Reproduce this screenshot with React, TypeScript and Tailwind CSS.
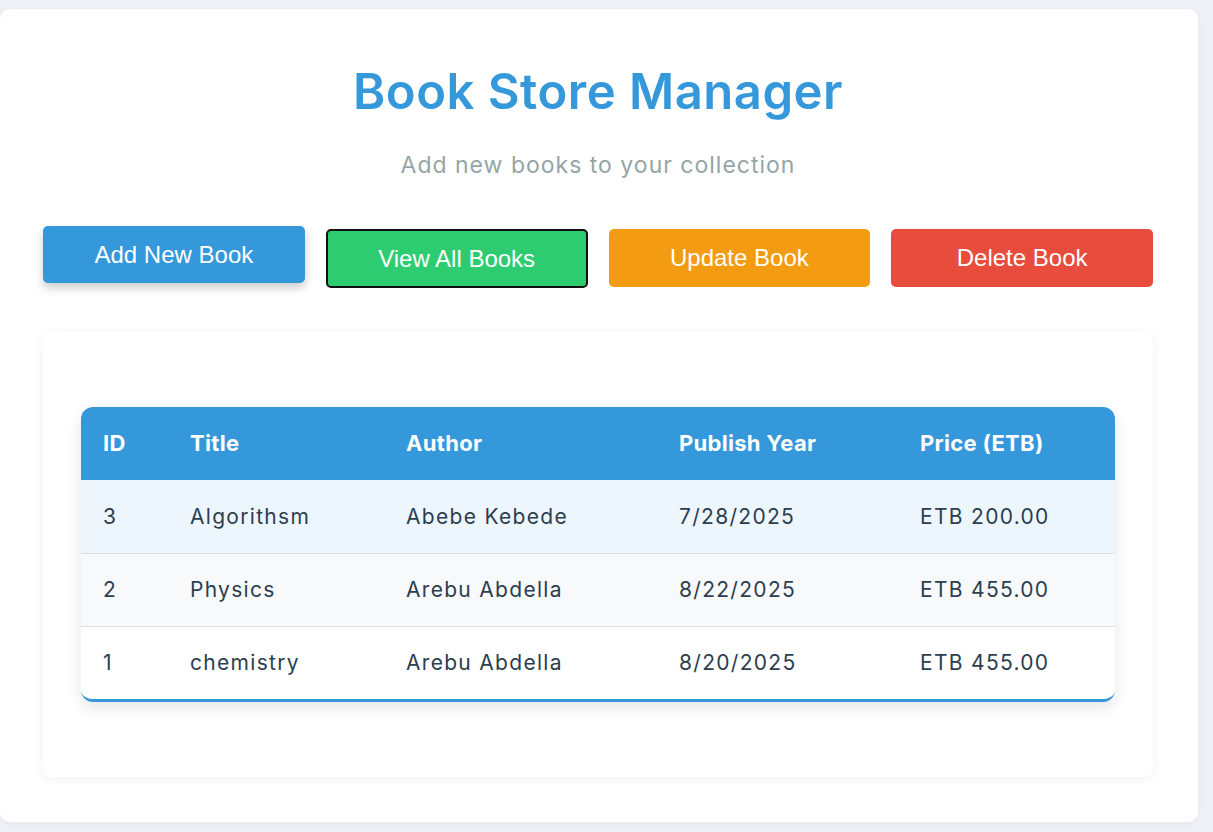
const books = [
  { id: 3, title: "Algorithsm", author: "Abebe Kebede", year: "7/28/2025", price: "ETB 200.00" },
  { id: 2, title: "Physics", author: "Arebu Abdella", year: "8/22/2025", price: "ETB 455.00" },
  { id: 1, title: "chemistry", author: "Arebu Abdella", year: "8/20/2025", price: "ETB 455.00" },
];

const rowBg = ["bg-[#eef6fd]", "bg-[#f8f9fa]", "bg-white"];

export default function App() {
  return (
    <div className="min-h-screen bg-[#eff0f5] pt-[9px] pr-[15px]" style={{ fontFamily: "Inter, 'Noto Sans', sans-serif" }}>
      <div className="bg-white rounded-[10px] h-[813px] pl-[43px] pr-[45px] pt-[49px] shadow-[0_2px_8px_rgba(0,0,0,0.04)]">
        {/* Header */}
        <h1 className="text-center text-[49px] leading-[68px] font-semibold text-[#3498db] tracking-[0.5px]">
          Book Store Manager
        </h1>
        <p className="text-center text-[23px] leading-[32px] text-[#95a5a6] mt-[23px] tracking-[1px]">
          Add new books to your collection
        </p>

        {/* Actions */}
        <div className="grid grid-cols-4 gap-[21px] mt-[48px] items-start" style={{ fontFamily: "'Liberation Sans', Arial, sans-serif" }}>
          <button className="h-[57px] -mt-[3px] rounded-[5px] bg-[#3498db] text-white text-[24px] shadow-[0_5px_10px_rgba(0,0,0,0.2)]">
            Add New Book
          </button>
          <button className="h-[59px] rounded-[5px] bg-[#2ecc71] text-white text-[24px] border-2 border-[#111]">
            View All Books
          </button>
          <button className="h-[58px] rounded-[5px] bg-[#f39c12] text-white text-[24px]">
            Update Book
          </button>
          <button className="h-[58px] rounded-[5px] bg-[#e74c3c] text-white text-[24px]">
            Delete Book
          </button>
        </div>

        {/* Table card */}
        <div className="mt-[44px] bg-white rounded-[8px] px-[38px] py-[75px] shadow-[0_2px_12px_rgba(0,0,0,0.06)]">
          <div className="rounded-[12px] overflow-hidden border-b-[3px] border-[#3498db] shadow-[0_6px_16px_rgba(0,0,0,0.1)]">
            <table className="w-full table-fixed border-collapse text-left">
              <colgroup>
                <col className="w-[87px]" />
                <col className="w-[216px]" />
                <col className="w-[273px]" />
                <col className="w-[241px]" />
                <col />
              </colgroup>
              <thead>
                <tr className="bg-[#3498db] text-white h-[73px] text-[22px] font-bold tracking-[0.3px]">
                  <th className="pl-[22px] font-bold">ID</th>
                  <th className="pl-[22px] font-bold">Title</th>
                  <th className="pl-[22px] font-bold">Author</th>
                  <th className="pl-[22px] font-bold">Publish Year</th>
                  <th className="pl-[22px] font-bold">Price (ETB)</th>
                </tr>
              </thead>
              <tbody>
                {books.map((b, i) => (
                  <tr key={b.id} className={`${rowBg[i]} h-[73px] text-[21px] tracking-[1.3px] text-[#2c3e50] ${i < 2 ? "border-b border-[#dddddd]" : ""}`}>
                    <td className="pl-[22px]">{b.id}</td>
                    <td className="pl-[22px]">{b.title}</td>
                    <td className="pl-[22px]">{b.author}</td>
                    <td className="pl-[22px]">{b.year}</td>
                    <td className="pl-[22px]">{b.price}</td>
                  </tr>
                ))}
              </tbody>
            </table>
          </div>
        </div>
      </div>
    </div>
  );
}
